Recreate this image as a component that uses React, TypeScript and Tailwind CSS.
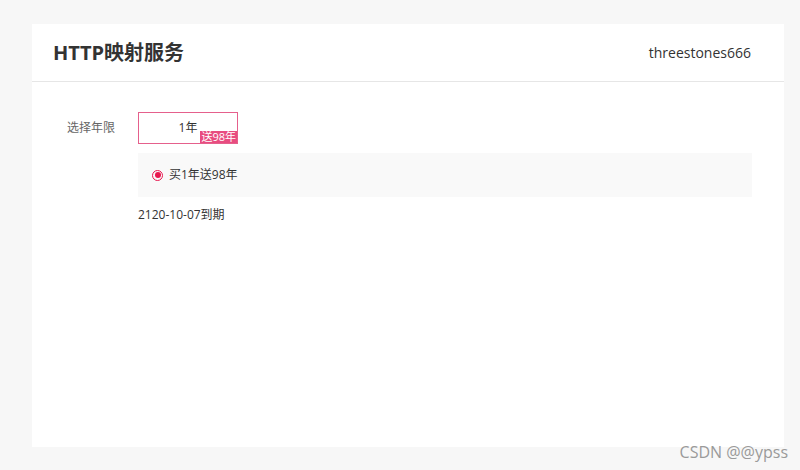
export default function App() {
  return (
    <div
      className="relative h-[470px] w-[800px] overflow-hidden bg-[#f7f7f7] pl-[32px] pt-[24px] text-[#333]"
      style={{ fontFamily: '"Open Sans", "Noto Sans CJK SC", sans-serif' }}
    >
      <div className="h-[423px] w-[752px] bg-white">
        <div className="flex h-[58px] items-center justify-between border-b border-[#e6e6e6] pl-[21px] pr-[33px]">
          <h1 className="text-[20px] font-bold leading-none text-[#333]">HTTP映射服务</h1>
          <span className="text-[14px] text-[#333]">threestones666</span>
        </div>

        <div className="flex pt-[30px]">
          <div className="w-[106px] pl-[35px] pt-[8px] text-[12px] leading-[16px] text-[#666]">选择年限</div>
          <div className="flex-1">
            <div className="relative flex h-[32px] w-[100px] items-center justify-center border border-[#e5608c] text-[12px] text-[#333]">
              1年
              <span className="absolute bottom-0 right-0 bg-[#e84c80] px-[1px] text-[11px] leading-[12px] text-white">
                送98年
              </span>
            </div>

            <div className="mt-[9px] flex h-[44px] w-[614px] items-center bg-[#f9f9f9] pl-[14px]">
              <span className="flex h-[11px] w-[11px] items-center justify-center rounded-full border border-[#e8174f]">
                <span className="h-[6px] w-[6px] rounded-full bg-[#e8174f]" />
              </span>
              <span className="ml-[6px] text-[12px] text-[#333]">买1年送98年</span>
            </div>

            <div className="mt-[10px] text-[12px] leading-[16px] text-[#333]">2120-10-07到期</div>
          </div>
        </div>
      </div>

      <span className="absolute bottom-[6px] right-[12px] text-[16px] text-[#9a9a9a]">CSDN @@ypss</span>
    </div>
  );
}
